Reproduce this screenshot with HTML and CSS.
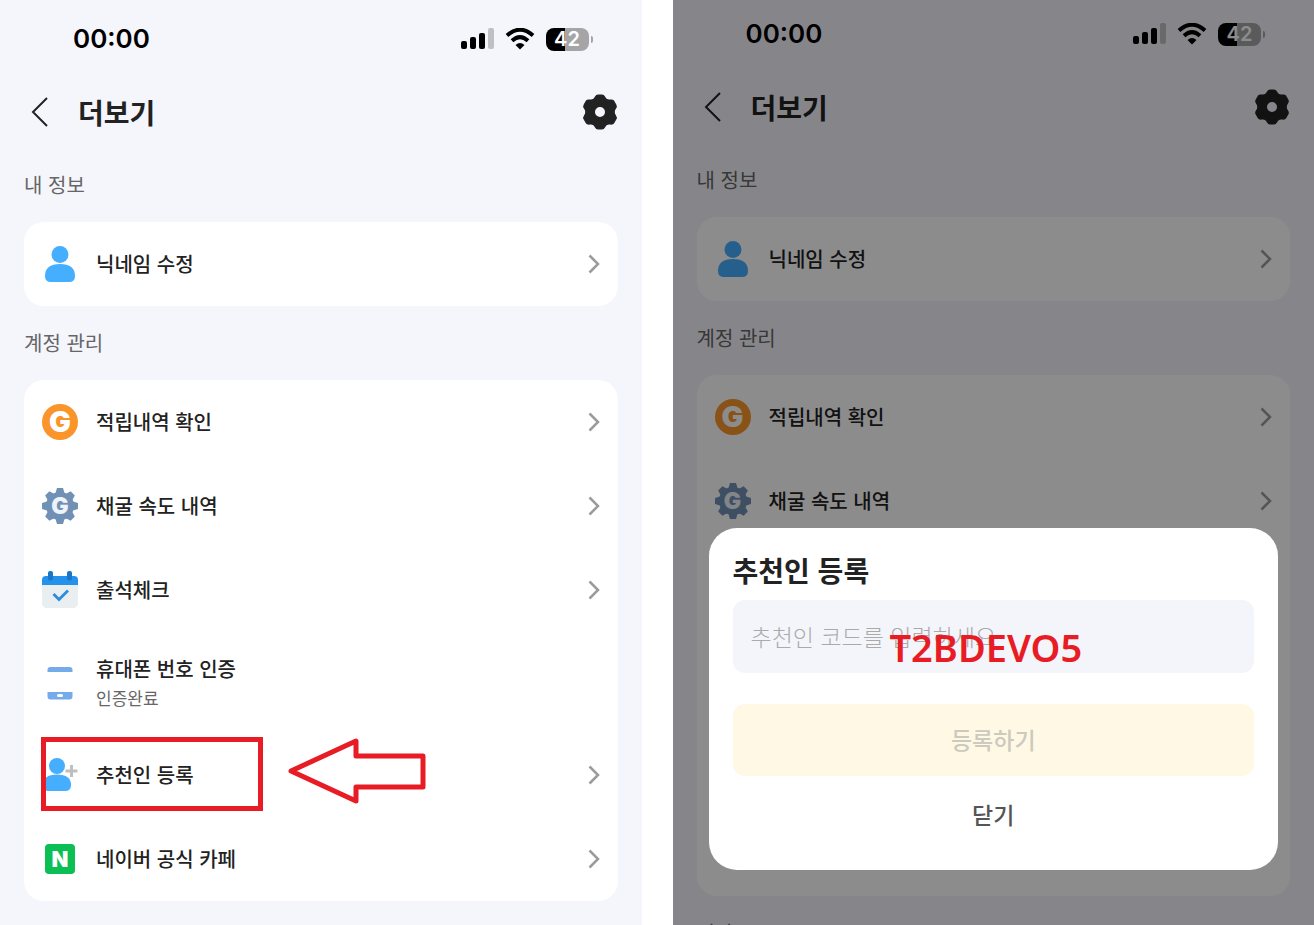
FILE: index.html
```html
<!DOCTYPE html>
<html lang="ko">
<head>
<meta charset="utf-8">
<title>더보기</title>
<link rel="stylesheet" href="styles.css">
</head>
<body>
<svg class="sprite" aria-hidden="true">
  <symbol id="signal" viewBox="0 0 33 22">
    <rect x="0" y="13" width="6" height="8" rx="2"/><rect x="9" y="9" width="6" height="12" rx="2"/><rect x="18" y="5" width="6" height="16" rx="2"/><rect x="27" y="0" width="6" height="21" rx="2" opacity=".22"/>
  </symbol>
  <symbol id="wifi" viewBox="0 0 30 22">
    <path d="M2 7.500Q15-4 28 7.500" fill="none" stroke="currentColor" stroke-width="4"/>
    <path d="M7 12.800Q15 5.500 23 12.800" fill="none" stroke="currentColor" stroke-width="4"/>
    <path d="M10.500 17Q15 13 19.500 17L15 21.500Z"/>
  </symbol>
  <symbol id="back" viewBox="0 0 18 32"><path d="M16 2 2 16 16 30" fill="none" stroke="currentColor" stroke-width="2"/></symbol>
  <symbol id="settings" viewBox="0 0 36 36">
    <path fill-rule="evenodd" d="M13 2.500Q14 .5 16 .5H20Q22 .5 23 2.500Q24.500 6 28 5.500Q31 5 32 6.500L34.300 10.500Q35.500 12.500 34 14.500Q31.500 18 34 21.500Q35.500 23.500 34.300 25.500L32 29.500Q31 31 28 30.500Q24.500 30 23 33.500Q22 35.500 20 35.500H16Q14 35.500 13 33.500Q11.500 30 8 30.500Q5 31 4 29.500L1.700 25.500Q.5 23.500 2 21.500Q4.500 18 2 14.500Q.5 12.500 1.700 10.500L4 6.500Q5 5 8 5.500Q11.500 6 13 2.500ZM18 13A5 5 0 1 0 18 23A5 5 0 1 0 18 13Z"/>
  </symbol>
  <symbol id="next" viewBox="0 0 12 20"><path d="M1.500 1.500 10 10 1.500 18.500" fill="none" stroke="#9b9b9b" stroke-width="2.500"/></symbol>
  <symbol id="person" viewBox="0 0 36 36">
    <circle cx="18" cy="8.500" r="8.500" fill="#45aeff"/><path d="M9 36Q3 36 3 30Q3 18 18 18T33 30Q33 36 27 36Z" fill="#45aeff"/>
  </symbol>
  <symbol id="gear" viewBox="0 0 36 36">
    <g fill="#7190b5"><circle cx="18" cy="18" r="14"/>
    <path id="teeth" d="M13.500 5 15 0H21L22.500 5V31L21 36H15L13.500 31Z"/>
    <use href="#teeth" transform="rotate(45 18 18)"/><use href="#teeth" transform="rotate(90 18 18)"/><use href="#teeth" transform="rotate(135 18 18)"/></g>
  </symbol>
  <symbol id="calendar" viewBox="0 0 36 38">
    <path d="M0 12H36V32Q36 37 31 37H5Q0 37 0 32Z" fill="#e9eef1"/><path d="M0 14V9Q0 5 4 5H32Q36 5 36 9V14Z" fill="#2492ea"/>
    <rect x="6" y="0" width="5" height="9.500" rx="2" fill="#1877c8"/><rect x="25" y="0" width="5" height="9.500" rx="2" fill="#1877c8"/>
    <path d="M11.500 23 17 28.500 26 19.500" fill="none" stroke="#2d8ddd" stroke-width="2.800"/>
  </symbol>
  <symbol id="mobile" viewBox="0 0 36 36">
    <path d="M5.500 7V5Q5.500 2 8.500 2H27.500Q30.500 2 30.500 5V7ZM5.500 27H30.500V31.500Q30.500 34.500 27.500 34.500H8.500Q5.500 34.500 5.500 31.500Z" fill="#74abeb"/><rect x="15" y="29" width="6" height="3" rx="1.500" fill="#fff"/>
  </symbol>
  <symbol id="invite" viewBox="0 0 36 36">
    <circle cx="15" cy="9" r="8" fill="#45aeff"/><path d="M7 34Q1 34 1 28Q1 17.500 15 17.500T29 28Q29 34 23 34Z" fill="#45aeff"/><path d="M29.500 8V20M23.500 14H35.500" stroke="#bfbfbf" stroke-width="3"/>
  </symbol>
</svg>

<main class="phone">
  <div class="status"><span class="time">00:00</span><span class="indicators"><svg class="signal"><use href="#signal"/></svg><svg class="wifi"><use href="#wifi"/></svg><span class="battery">42</span></span></div>
  <header class="header"><button class="icon-button" aria-label="뒤로"><svg class="back"><use href="#back"/></svg></button><h1 class="title">더보기</h1><button class="icon-button" aria-label="설정"><svg class="settings"><use href="#settings"/></svg></button></header>
  <h2 class="section">내 정보</h2>
  <nav class="card"><a class="row" href="#"><svg class="row-icon"><use href="#person"/></svg><span class="label">닉네임 수정</span><svg class="next"><use href="#next"/></svg></a></nav>
  <h2 class="section">계정 관리</h2>
  <nav class="card">
    <a class="row" href="#"><span class="mark mark-coin">G</span><span class="label">적립내역 확인</span><svg class="next"><use href="#next"/></svg></a>
    <a class="row" href="#"><span class="mark mark-gear"><svg class="gear"><use href="#gear"/></svg><span class="gear-letter">G</span></span><span class="label">채굴 속도 내역</span><svg class="next"><use href="#next"/></svg></a>
    <a class="row" href="#"><svg class="row-icon"><use href="#calendar"/></svg><span class="label">출석체크</span><svg class="next"><use href="#next"/></svg></a>
    <div class="row row-tall"><svg class="row-icon"><use href="#mobile"/></svg><span class="label">휴대폰 번호 인증<small class="sub">인증완료</small></span></div>
    <div class="marked">
      <a class="row" href="#"><svg class="row-icon"><use href="#invite"/></svg><span class="label">추천인 등록</span><svg class="next"><use href="#next"/></svg></a>
      <span class="highlight"></span>
      <svg class="arrow" viewBox="0 0 138 66"><path d="M3 33 68 3V18H135V49H68V63Z" fill="none" stroke="#e81c24" stroke-width="5" stroke-linejoin="round"/></svg>
    </div>
    <a class="row" href="#"><span class="mark mark-naver">N</span><span class="label">네이버 공식 카페</span><svg class="next"><use href="#next"/></svg></a>
  </nav>
</main>

<section class="phone phone-dimmed">
  <div class="status"><span class="time">00:00</span><span class="indicators"><svg class="signal"><use href="#signal"/></svg><svg class="wifi"><use href="#wifi"/></svg><span class="battery">42</span></span></div>
  <header class="header"><button class="icon-button" aria-label="뒤로"><svg class="back"><use href="#back"/></svg></button><h1 class="title">더보기</h1><button class="icon-button" aria-label="설정"><svg class="settings"><use href="#settings"/></svg></button></header>
  <h2 class="section">내 정보</h2>
  <nav class="card"><a class="row" href="#"><svg class="row-icon"><use href="#person"/></svg><span class="label">닉네임 수정</span><svg class="next"><use href="#next"/></svg></a></nav>
  <h2 class="section">계정 관리</h2>
  <nav class="card card-rest">
    <a class="row" href="#"><span class="mark mark-coin">G</span><span class="label">적립내역 확인</span><svg class="next"><use href="#next"/></svg></a>
    <a class="row" href="#"><span class="mark mark-gear"><svg class="gear"><use href="#gear"/></svg><span class="gear-letter">G</span></span><span class="label">채굴 속도 내역</span><svg class="next"><use href="#next"/></svg></a>
  </nav>
  <h2 class="section">기타</h2>
  <div class="overlay">
    <form class="dialog" role="dialog" aria-labelledby="dialog-title">
      <h2 class="dialog-title" id="dialog-title">추천인 등록</h2>
      <div class="field"><input class="code" type="text" aria-label="추천인 코드" placeholder="추천인 코드를 입력하세요"><strong class="stamp">T2BDEVO5</strong></div>
      <button class="submit" type="button">등록하기</button>
      <button class="close" type="button">닫기</button>
    </form>
  </div>
</section>
</body>
</html>
```
FILE: styles.css
```css
* { box-sizing: border-box; }

body {
  margin: 0;
  display: flex;
  gap: 31px;
  background: #fff;
  color: #222;
  font-family: "Noto Sans CJK KR", sans-serif;
}

h1, h2 { margin: 0; }
button, input { border: 0; padding: 0; font: inherit; color: inherit; background: none; }
svg { display: block; flex: none; fill: currentColor; }
.sprite { position: absolute; width: 0; height: 0; }

.phone {
  position: relative;
  flex: 1;
  height: 100vh;
  overflow: hidden;
  padding: 0 24px;
  background: #f5f5fc;
}

.status {
  display: flex;
  align-items: center;
  justify-content: space-between;
  height: 76px;
  padding: 2px 24px 0 49px;
  color: #000;
}
.phone-dimmed .status { height: 71px; padding-top: 0; padding-bottom: 3px; }
.time { font: 600 26px/32px Inter, sans-serif; }
.indicators { display: flex; align-items: center; gap: 11px; }
.signal { width: 33px; height: 22px; }
.wifi { width: 30px; height: 22px; }
.battery {
  position: relative;
  width: 43px;
  margin-right: 5px;
  border-radius: 8px;
  background: linear-gradient(90deg, #000 19px, #a5a5a8 19px);
  color: #fff;
  font: 600 20px/23px Inter, sans-serif;
  text-align: center;
}
.battery::after {
  content: "";
  position: absolute;
  left: 45px;
  top: 8px;
  width: 2px;
  height: 7px;
  border-radius: 0 2px 2px 0;
  background: #a5a5a8;
}

.header { display: flex; align-items: center; height: 72px; }
.icon-button { display: grid; place-items: center; height: 40px; }
.back { width: 18px; height: 32px; margin: 0 7px; }
.settings { width: 36px; height: 36px; }
.title { flex: 1; padding-left: 22px; font-size: 28px; line-height: 40px; font-weight: 700; }

.section { font-size: 20px; line-height: 74px; font-weight: 400; color: #666; }

.card { border-radius: 20px; background: #fff; }
.card-rest { height: 521px; }
.row {
  display: flex;
  align-items: center;
  gap: 18px;
  height: 84px;
  padding: 0 18px;
  color: #222;
  text-decoration: none;
}
.row-tall { height: 101px; }
.row-icon { width: 36px; height: 38px; }
.label { flex: 1; font-size: 20px; line-height: 30px; font-weight: 500; }
.sub { display: block; font-size: 17px; line-height: 28px; font-weight: 400; color: #666; }
.next { width: 12px; height: 20px; }

.mark { flex: none; color: #fff; font-family: Inter, sans-serif; font-weight: 900; text-align: center; }
.mark-coin { width: 36px; border-radius: 50%; background: #f9952b; font-size: 29px; line-height: 36px; }
.mark-gear { display: grid; place-items: center; width: 36px; color: #eef3fa; font-size: 23px; line-height: 36px; }
.gear, .gear-letter { grid-area: 1 / 1; }
.gear { width: 36px; height: 36px; }
.gear-letter { z-index: 0; }
.mark-naver { width: 30px; margin: 0 3px; border-radius: 4px; background: #0bbf55; font-size: 22px; line-height: 30px; }

.marked { position: relative; }
.highlight {
  position: absolute;
  left: 17px;
  top: 4px;
  width: 222px;
  height: 74px;
  border: 5px solid #e81c24;
}
.arrow { position: absolute; left: 264px; top: 5px; width: 138px; height: 66px; }

.overlay {
  position: absolute;
  inset: 0;
  z-index: 1;
  display: flex;
  align-items: flex-end;
  padding: 36px 36px 55px;
  background: rgba(0, 0, 0, .45);
}
.dialog {
  flex: 1;
  display: flex;
  flex-direction: column;
  padding: 22px 24px 36px;
  border-radius: 28px;
  background: #fff;
}
.dialog-title { font-size: 28px; line-height: 40px; font-weight: 700; }
.field { position: relative; margin: 10px 0 31px; }
.code {
  display: block;
  width: 100%;
  height: 73px;
  padding: 0 18px 2px;
  border-radius: 12px;
  background: #f4f5fb;
  font-size: 23px;
}
.code::placeholder { color: #aaa; font-weight: 300; opacity: 1; }
.stamp {
  position: absolute;
  left: 157px;
  top: 21px;
  font: 600 38px/52px "Noto Sans", sans-serif;
  color: #e81c24;
}
.submit {
  height: 72px;
  padding-bottom: 2px;
  border-radius: 12px;
  background: #fff8e5;
  color: #ccc9bd;
  font-size: 23px;
  font-weight: 500;
}
.close { align-self: center; margin-top: 18px; color: #555; font-size: 23px; line-height: 40px; font-weight: 500; }
```
